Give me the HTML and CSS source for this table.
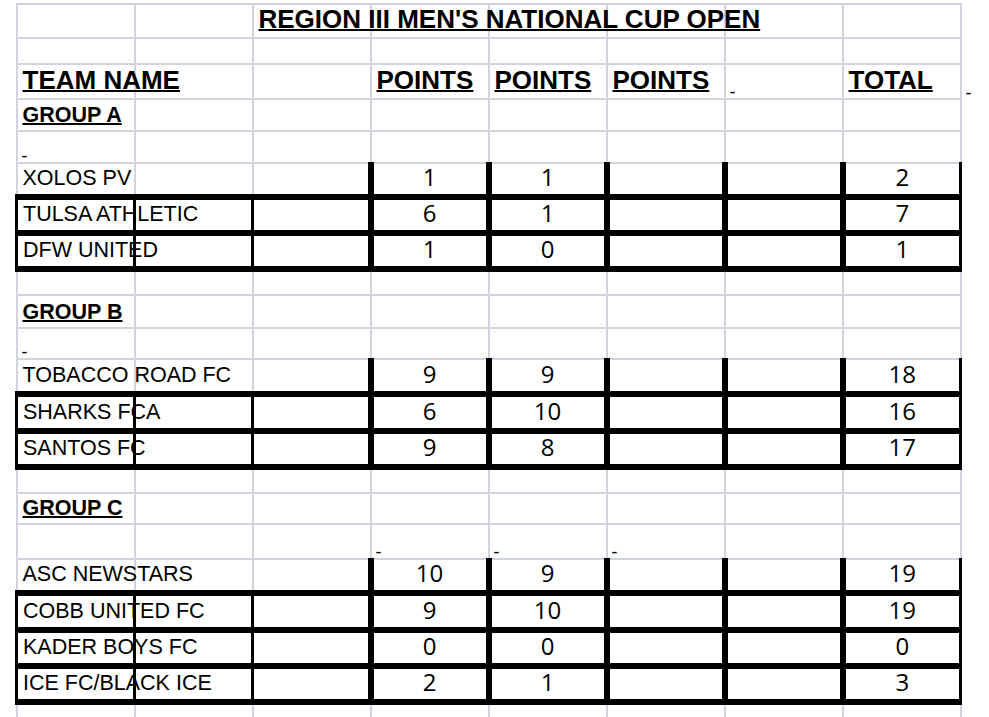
FILE: index.html
```html
<!DOCTYPE html>
<html lang="en">
<head>
<meta charset="utf-8">
<title>Region III Men's National Cup Open</title>
<link rel="stylesheet" href="styles.css">
</head>
<body>
<table class="sheet">
  <colgroup>
    <col class="c"><col class="c"><col class="c"><col class="c"><col class="c"><col class="c"><col class="c"><col class="c"><col class="c9">
  </colgroup>
  <tbody>
    <tr class="h33"><td></td><td></td><td class="title">REGION III MEN'S NATIONAL CUP OPEN</td><td></td><td></td><td></td><td></td><td></td><td class="x"></td></tr>
    <tr class="h26"><td></td><td></td><td></td><td></td><td></td><td></td><td></td><td></td><td class="x"></td></tr>
    <tr class="h35"><td class="hd">TEAM NAME</td><td></td><td></td><td class="hd">POINTS</td><td class="hd">POINTS</td><td class="hd">POINTS</td><td class="dash">-</td><td class="hd">TOTAL</td><td class="x dash">-</td></tr>
    <tr class="h32"><td class="grp">GROUP A</td><td></td><td></td><td></td><td></td><td></td><td></td><td></td><td class="x"></td></tr>
    <tr class="h32"><td class="dash">-</td><td></td><td></td><td></td><td></td><td></td><td></td><td></td><td class="x"></td></tr>
    <tr class="team h34"><td class="n">XOLOS PV</td><td class="n"></td><td class="n"></td><td class="p num">1</td><td class="p num">1</td><td class="p num"></td><td class="p num"></td><td class="p t num">2</td><td class="x"></td></tr>
    <tr class="team next h36"><td class="n">TULSA ATHLETIC</td><td class="n"></td><td class="n"></td><td class="p num">6</td><td class="p num">1</td><td class="p num"></td><td class="p num"></td><td class="p t num">7</td><td class="x"></td></tr>
    <tr class="team next h36"><td class="n">DFW UNITED</td><td class="n"></td><td class="n"></td><td class="p num">1</td><td class="p num">0</td><td class="p num"></td><td class="p num"></td><td class="p t num">1</td><td class="x"></td></tr>
    <tr class="h26"><td></td><td></td><td></td><td></td><td></td><td></td><td></td><td></td><td class="x"></td></tr>
    <tr class="h33"><td class="grp">GROUP B</td><td></td><td></td><td></td><td></td><td></td><td></td><td></td><td class="x"></td></tr>
    <tr class="h31"><td class="dash">-</td><td></td><td></td><td></td><td></td><td></td><td></td><td></td><td class="x"></td></tr>
    <tr class="team h35"><td class="n">TOBACCO ROAD FC</td><td class="n"></td><td class="n"></td><td class="p num">9</td><td class="p num">9</td><td class="p num"></td><td class="p num"></td><td class="p t num">18</td><td class="x"></td></tr>
    <tr class="team next h37"><td class="n">SHARKS FCA</td><td class="n"></td><td class="n"></td><td class="p num">6</td><td class="p num">10</td><td class="p num"></td><td class="p num"></td><td class="p t num">16</td><td class="x"></td></tr>
    <tr class="team next h36"><td class="n">SANTOS FC</td><td class="n"></td><td class="n"></td><td class="p num">9</td><td class="p num">8</td><td class="p num"></td><td class="p num"></td><td class="p t num">17</td><td class="x"></td></tr>
    <tr class="h26"><td></td><td></td><td></td><td></td><td></td><td></td><td></td><td></td><td class="x"></td></tr>
    <tr class="h31"><td class="grp">GROUP C</td><td></td><td></td><td></td><td></td><td></td><td></td><td></td><td class="x"></td></tr>
    <tr class="h35"><td></td><td></td><td></td><td class="dash">-</td><td class="dash">-</td><td class="dash">-</td><td></td><td></td><td class="x"></td></tr>
    <tr class="team h34"><td class="n">ASC NEWSTARS</td><td class="n"></td><td class="n"></td><td class="p num">10</td><td class="p num">9</td><td class="p num"></td><td class="p num"></td><td class="p t num">19</td><td class="x"></td></tr>
    <tr class="team next h37"><td class="n">COBB UNITED FC</td><td class="n"></td><td class="n"></td><td class="p num">9</td><td class="p num">10</td><td class="p num"></td><td class="p num"></td><td class="p t num">19</td><td class="x"></td></tr>
    <tr class="team next h35"><td class="n">KADER BOYS FC</td><td class="n"></td><td class="n"></td><td class="p num">0</td><td class="p num">0</td><td class="p num"></td><td class="p num"></td><td class="p t num">0</td><td class="x"></td></tr>
    <tr class="team next h36"><td class="n">ICE FC/BLACK ICE</td><td class="n"></td><td class="n"></td><td class="p num">2</td><td class="p num">1</td><td class="p num"></td><td class="p num"></td><td class="p t num">3</td><td class="x"></td></tr>
    <tr class="h36"><td></td><td></td><td></td><td></td><td></td><td></td><td></td><td></td><td class="x"></td></tr>
  </tbody>
</table>
</body>
</html>
```

FILE: styles.css
```css
html, body {
  margin: 0;
  padding: 0;
  background: #ffffff;
  overflow: hidden;
}

.sheet {
  border-collapse: collapse;
  table-layout: fixed;
  width: 960px;
  margin: 3px 0 0 15px;
  font-family: "Liberation Sans", Arial, sans-serif;
  color: #000;
}

.sheet col.c { width: 118px; }
.sheet col.c9 { width: 16px; }

.sheet td {
  border: 2px solid #d3d3df;
  padding: 0 5px 4px;
  vertical-align: bottom;
  white-space: nowrap;
  overflow: visible;
  font-size: 21.5px;
  line-height: 24px;
}

.sheet td.x { border: none; }

tr.h26 { height: 26px; }
tr.h31 { height: 31px; }
tr.h32 { height: 32px; }
tr.h33 { height: 33px; }
tr.h34 { height: 34px; }
tr.h35 { height: 35px; }
tr.h36 { height: 36px; }
tr.h37 { height: 37px; }

.sheet td.title {
  font-weight: bold;
  font-size: 26px;
  line-height: 28px;
  text-decoration: underline;
  text-decoration-thickness: 2px;
  padding-bottom: 4px;
}

.sheet td.hd {
  font-weight: bold;
  font-size: 26px;
  line-height: 28px;
  text-decoration: underline;
  text-decoration-thickness: 2px;
  padding-bottom: 4px;
}

.sheet td.grp {
  font-weight: bold;
  font-size: 21.5px;
  text-decoration: underline;
  text-decoration-thickness: 2px;
  padding-bottom: 3px;
}

.sheet td.num {
  font-family: "Open Sans", "Noto Sans", sans-serif;
  font-size: 24px;
  line-height: 26px;
  text-align: center;
  padding-bottom: 4px;
}

.sheet td.dash {
  font-size: 18px;
  line-height: 12px;
  padding: 0 0 0 4px;
}

tr.team td { border-bottom: 6px solid #000; }
tr.team td.p { border-left: 6px solid #000; }
tr.team td.t { border-right: 3px solid #000; }
tr.team.next td.n { border-left: 3px solid #000; }
```
